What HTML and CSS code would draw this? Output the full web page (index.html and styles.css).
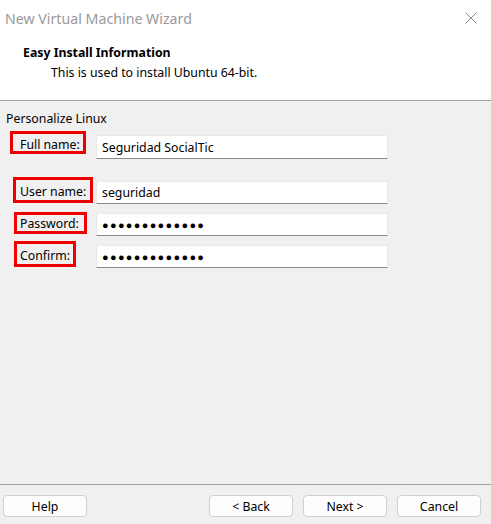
FILE: index.html
```html
<!DOCTYPE html>
<html lang="en">
<head>
<meta charset="utf-8">
<title>New Virtual Machine Wizard</title>
<link rel="stylesheet" href="styles.css">
</head>
<body>
<div class="window">
  <header class="head">
    <div class="titlebar">
      <span class="title">New Virtual Machine Wizard</span>
      <svg class="close" width="12" height="12" viewBox="0 0 12 12"><path d="M0.5 0.5 L11.5 11.5 M11.5 0.5 L0.5 11.5" stroke="#8a8a8a" stroke-width="1" fill="none"/></svg>
    </div>
    <div class="heading">Easy Install Information</div>
    <div class="subheading">This is used to install Ubuntu 64-bit.</div>
  </header>
  <main class="content">
    <div class="section">Personalize Linux</div>
    <div class="row row-full">
      <div class="cell"><span class="label label-full">Full name:</span></div>
      <div class="field">Seguridad SocialTic</div>
    </div>
    <div class="row row-user">
      <div class="cell"><span class="label label-user">User name:</span></div>
      <div class="field">seguridad</div>
    </div>
    <div class="row row-pass">
      <div class="cell"><span class="label label-pass">Password:</span></div>
      <div class="field dots">●●●●●●●●●●●●●</div>
    </div>
    <div class="row row-conf">
      <div class="cell"><span class="label label-conf">Confirm:</span></div>
      <div class="field dots">●●●●●●●●●●●●●</div>
    </div>
  </main>
  <footer class="foot">
    <button class="btn">Help</button>
    <div class="spacer"></div>
    <button class="btn">&lt; Back</button>
    <button class="btn">Next &gt;</button>
    <button class="btn">Cancel</button>
  </footer>
</div>
</body>
</html>
```
FILE: styles.css
```css
* { box-sizing: border-box; }
html, body { margin: 0; padding: 0; }
body {
  width: 491px;
  height: 524px;
  overflow: hidden;
  background: #f0f0f0;
  font-family: "Noto Sans", "Open Sans", sans-serif;
  font-size: 12.3px;
  color: #000;
}
.window {
  display: flex;
  flex-direction: column;
  height: 524px;
}
.head {
  background: #fff;
  height: 101px;
  border-bottom: 1px solid #a0a0a0;
  flex: none;
}
.titlebar {
  height: 36px;
  display: flex;
  align-items: center;
  justify-content: space-between;
  padding: 0 14px 0 5px;
}
.title {
  font-size: 14.2px;
  color: #9a9a9a;
}
.close { display: block; }
.heading {
  font-weight: bold;
  padding-left: 23px;
  margin-top: 8px;
  line-height: 18px;
}
.subheading {
  padding-left: 51px;
  margin-top: 2px;
  line-height: 18px;
}
.content {
  flex: 1;
  padding-top: 10px;
}
.section {
  padding-left: 6px;
  line-height: 16px;
}
.row {
  display: flex;
  height: 24px;
}
.row-full { margin-top: 8px; height: 24px; }
.row-user { margin-top: 22px; height: 23px; }
.row-pass { margin-top: 9px; height: 23px; }
.row-conf { margin-top: 9px; height: 23px; }
.cell {
  width: 96px;
  flex: none;
}
.label {
  display: inline-block;
  border: 3px solid #ee0000;
  line-height: 16px;
}
.label-full { margin: -4px 0 0 10px; width: 76px; height: 23px; padding: 3px 0 0 7px; }
.label-user { margin: -4px 0 0 13px; width: 80px; padding-left: 4px; height: 26px; padding-top: 4px; }
.label-pass { margin: -1px 0 0 14px; width: 73px; padding-left: 3px; height: 22px; padding-top: 1px; }
.label-conf { margin: -4px 0 0 14px; width: 62px; padding-left: 3px; height: 26px; padding-top: 4px; }
.field {
  width: 292px;
  background: #fff;
  border: 1px solid #e8e8e8;
  border-bottom: 1px solid #8a8a8a;
  padding-left: 5px;
  display: flex;
  align-items: center;
}
.dots {
  font-size: 11px;
  letter-spacing: 1.3px;
  padding-left: 5px;
}
.foot {
  flex: none;
  height: 40px;
  border-top: 1px solid #a0a0a0;
  display: flex;
  align-items: flex-start;
  padding: 10px 10px 0 3px;
  gap: 10px;
}
.spacer { flex: 1; }
.btn {
  width: 84px;
  height: 22px;
  background: #fdfdfd;
  border: 1px solid #d0d0d0;
  border-radius: 4px;
  font-family: inherit;
  font-size: 12.3px;
  color: #000;
  padding: 0;
}
```
